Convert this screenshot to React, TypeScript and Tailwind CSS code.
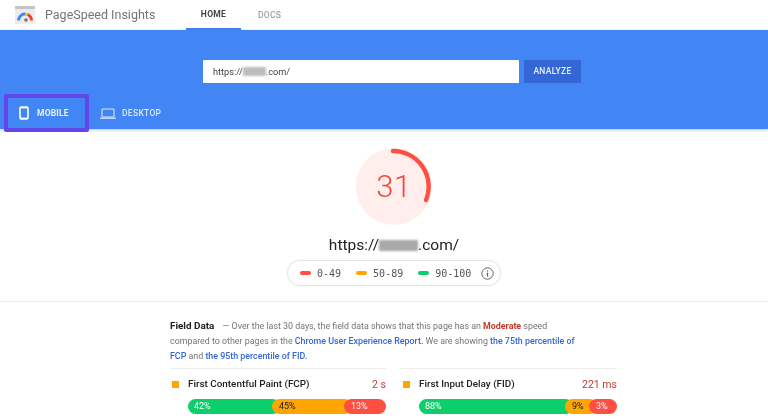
import React from "react";

function Logo() {
  return (
    <svg width="20" height="18" viewBox="0 0 20 18" className="shrink-0">
      <rect x="0" y="0" width="20" height="18" fill="#ececec" />
      <rect x="0" y="0" width="20" height="3" fill="#c4c4c4" />
      <path d="M3.5 14.5a6.5 6.5 0 0 1 6.5-6.5" stroke="#4285f4" strokeWidth="2.8" fill="none" />
      <path d="M10 8a6.5 6.5 0 0 1 2.6.6" stroke="#fbbc05" strokeWidth="2.8" fill="none" />
      <path d="M12.6 8.6a6.5 6.5 0 0 1 3.9 5.9" stroke="#ea4335" strokeWidth="2.8" fill="none" />
      <circle cx="11" cy="14" r="1.8" fill="#757575" />
    </svg>
  );
}

function Phone() {
  return (
    <svg width="10" height="14" viewBox="0 0 10 14">
      <rect x="1" y="1" width="8" height="12" rx="1.4" fill="none" stroke="white" strokeWidth="1.6" />
      <rect x="1" y="1" width="8" height="1.4" fill="white" />
      <rect x="1" y="11.6" width="8" height="1.4" fill="white" />
    </svg>
  );
}

function Laptop() {
  return (
    <svg width="16" height="11" viewBox="0 0 16 11">
      <rect x="2" y="1" width="12" height="8" rx="0.8" fill="none" stroke="#dbe7fd" strokeWidth="1.1" />
      <rect x="0" y="9.6" width="16" height="1.2" fill="#dbe7fd" />
    </svg>
  );
}

function Gauge() {
  return (
    <div className="relative w-[76px] h-[77px] flex items-center justify-center rounded-full bg-[#ffeeec]">
      <svg width="76" height="77" viewBox="0 0 76 77" className="absolute inset-0">
        <path
          d="M 37 3 A 35.5 35.5 0 0 1 70 52"
          fill="none"
          stroke="#ff4e42"
          strokeWidth="4.4"
          strokeLinecap="round"
        />
      </svg>
      <span className="text-[31px] leading-none font-light text-[#f4473c] tracking-[0.5px]">31</span>
    </div>
  );
}

function Blurred({ w, h, c }: { w: string; h: string; c: string }) {
  return <span className={`inline-block ${w} ${h} ${c} blur-[1px] align-middle`} />;
}

function LegendItem({ color, label }: { color: string; label: string }) {
  return (
    <div className="flex items-center gap-[6px]">
      <span className={`w-[11px] h-[4px] rounded-full ${color}`} />
      <span className="text-[10px] text-[#555] font-['DejaVu_Sans_Mono',monospace]">{label}</span>
    </div>
  );
}

function Info() {
  return (
    <svg width="13" height="13" viewBox="0 0 13 13">
      <circle cx="6.5" cy="6.5" r="5.7" fill="none" stroke="#616161" strokeWidth="1" />
      <rect x="5.9" y="5.6" width="1.2" height="4" fill="#616161" />
      <rect x="5.9" y="3.4" width="1.2" height="1.2" fill="#616161" />
    </svg>
  );
}

function Metric({
  title,
  value,
  segments,
}: {
  title: string;
  value: string;
  segments: { w: string; color: string; text: string; label: string }[];
}) {
  return (
    <div className="w-[216px]">
      <div className="h-px bg-[#eeeeee]" />
      <div className="flex items-center mt-[10px] h-[11px] text-[9.9px] text-[#212121]">
        <span className="w-[7px] h-[7px] bg-[#ffa400] ml-[2px] mr-[9px]" />
        <span className="flex-1 font-medium">{title}</span>
        <span className="text-[10.5px] text-[#c5392b]">{value}</span>
      </div>
      <div className="flex h-[15px] ml-[18px] mt-[9px] text-[9px] leading-[15px]">
        {segments.map((s, i) => (
          <div key={i} className={`${s.w} ${s.color} ${s.text} ${i ? "-ml-[8px] pl-[7px]" : "pl-[6px]"} rounded-full`}>
            {s.label}
          </div>
        ))}
      </div>
    </div>
  );
}

export default function App() {
  return (
    <div className="w-[768px] h-[420px] overflow-hidden bg-white font-['Roboto',sans-serif] blur-[0.4px]">
      <header className="h-[30px] flex items-center bg-white">
        <div className="ml-[15px]"><Logo /></div>
        <span className="ml-[10px] w-[141px] text-[12.5px] text-[#757575] whitespace-nowrap">PageSpeed Insights</span>
        <div className="h-full w-[55px] flex items-center justify-center border-b-2 border-[#4285f4] text-[8.5px] font-bold text-[#424242] tracking-[0.3px]">
          HOME
        </div>
        <span className="ml-[17px] text-[8.5px] font-medium text-[#9e9e9e] tracking-[0.3px]">DOCS</span>
      </header>

      <section className="h-[99px] bg-[#4285f4] flex flex-col shadow-[0_1px_3px_rgba(0,0,0,0.25)] relative">
        <div className="flex justify-start pl-[203px] pt-[30px] gap-[5px] shrink-0">
          <div className="w-[316px] h-[23px] bg-white rounded-[1px] flex items-center pl-[10px] text-[9.2px] text-[#424242]">
            https://<Blurred w="w-[23px]" h="h-[9px]" c="bg-[#bdbdbd]" />.com/
          </div>
          <button className="w-[57px] h-[23px] bg-[#3367d6] rounded-[1px] text-[8.5px] font-medium text-[#e8f0fe] tracking-[0.3px]">
            ANALYZE
          </button>
        </div>
        <div className="mt-[11px] flex items-stretch pl-[4px] h-[38px] shrink-0">
          <div className="w-[85px] border-[4px] border-[#6246ea] rounded-[2px] flex items-center pl-[11px] gap-[8px] text-[8.5px] font-bold text-[#eaf1fe] tracking-[0.2px]">
            <Phone />
            MOBILE
          </div>
          <div className="ml-[11px] flex items-center gap-[6px] text-[8.5px] font-medium text-[#dbe7fd] tracking-[0.3px]">
            <Laptop />
            DESKTOP
          </div>
        </div>
      </section>

      <section className="h-[173px] flex flex-col items-center pt-[19px] border-b border-[#ececec] pl-[20px]">
        <Gauge />
        <div className="mt-[10px] text-[15.5px] leading-[20px] text-[#212121] whitespace-nowrap">
          https://<Blurred w="w-[39px]" h="h-[11px]" c="bg-[#a8a8a8]" />.com/
        </div>
        <div className="mt-[5px] w-[214px] h-[26px] rounded-full border border-[#e4e4e4] shadow-[0_0_2px_rgba(0,0,0,0.08)] flex items-center pl-[12px] pr-[6px] justify-between">
          <div className="flex items-center gap-[15px]">
            <LegendItem color="bg-[#ff4e42]" label="0-49" />
            <LegendItem color="bg-[#ffa400]" label="50-89" />
            <LegendItem color="bg-[#0cce6b]" label="90-100" />
          </div>
          <Info />
        </div>
      </section>

      <section className="pl-[170px] pt-[16px]">
        <p className="text-[8.85px] leading-[15px] text-[#757575] whitespace-nowrap">
          <span className="font-bold text-[#212121] text-[9.9px]">Field Data</span>
          <span className="ml-[6px]"> — Over the last 30 days, the field data shows that this page has an </span>
          <span className="font-bold text-[#c5392b]">Moderate</span> speed
          <br />
          compared to other pages in the <span className="font-medium text-[#3367d6]">Chrome User Experience Report.</span> We are showing <span className="font-medium text-[#3367d6]">the 75th percentile of</span>
          <br />
          <span className="font-medium text-[#3367d6]">FCP</span> and <span className="font-medium text-[#3367d6]">the 95th percentile of FID.</span>
        </p>
        <div className="flex gap-[15px] mt-[4px]">
          <Metric
            title="First Contentful Paint (FCP)"
            value="2 s"
            segments={[
              { w: "w-[92px]", color: "bg-[#0cce6b]", text: "text-white", label: "42%" },
              { w: "w-[80px]", color: "bg-[#ffa400]", text: "text-[#212121]", label: "45%" },
              { w: "w-[42px]", color: "bg-[#ff4e42]", text: "text-white", label: "13%" },
            ]}
          />
          <Metric
            title="First Input Delay (FID)"
            value="221 ms"
            segments={[
              { w: "w-[154px]", color: "bg-[#0cce6b]", text: "text-white", label: "88%" },
              { w: "w-[32px]", color: "bg-[#ffa400]", text: "text-[#212121]", label: "9%" },
              { w: "w-[28px]", color: "bg-[#ff4e42]", text: "text-white", label: "3%" },
            ]}
          />
        </div>
      </section>
    </div>
  );
}
